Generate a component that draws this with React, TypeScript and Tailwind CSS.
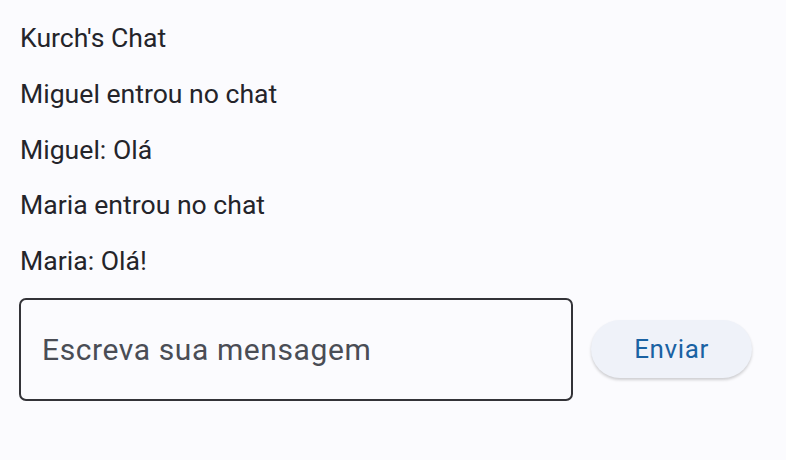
export default function App() {
  return (
    <div
      className="w-[786px] h-[460px] bg-[#fbfbfe] overflow-hidden"
      style={{ fontFamily: "Roboto, 'Noto Sans', sans-serif" }}
    >
      <div className="flex flex-col pl-[19px] pt-[10px]">
        {["Kurch's Chat", "Miguel entrou no chat", "Miguel: Olá", "Maria entrou no chat", "Maria: Olá!"].map((t) => (
          <div key={t} className="h-[55.8px] flex items-center text-[26.6px] text-[#24242a] pl-[1px]">
            {t}
          </div>
        ))}
        <div className="flex items-center mt-[9px]">
          <div className="w-[554px] h-[103px] border-2 border-[#333338] rounded-[7px] flex items-center pl-[21px] bg-[#fbfbfe]">
            <span className="text-[30px] text-[#4a4d55] tracking-[0.6px]">Escreva sua mensagem</span>
          </div>
          <button className="ml-[18px] w-[161px] h-[58px] rounded-full bg-[#eff2f9] shadow-[0_2px_3px_rgba(0,0,0,0.18)] text-[#1a62a3] text-[26px] font-normal tracking-[0.6px] flex items-center justify-center">
            Enviar
          </button>
        </div>
      </div>
    </div>
  );
}
